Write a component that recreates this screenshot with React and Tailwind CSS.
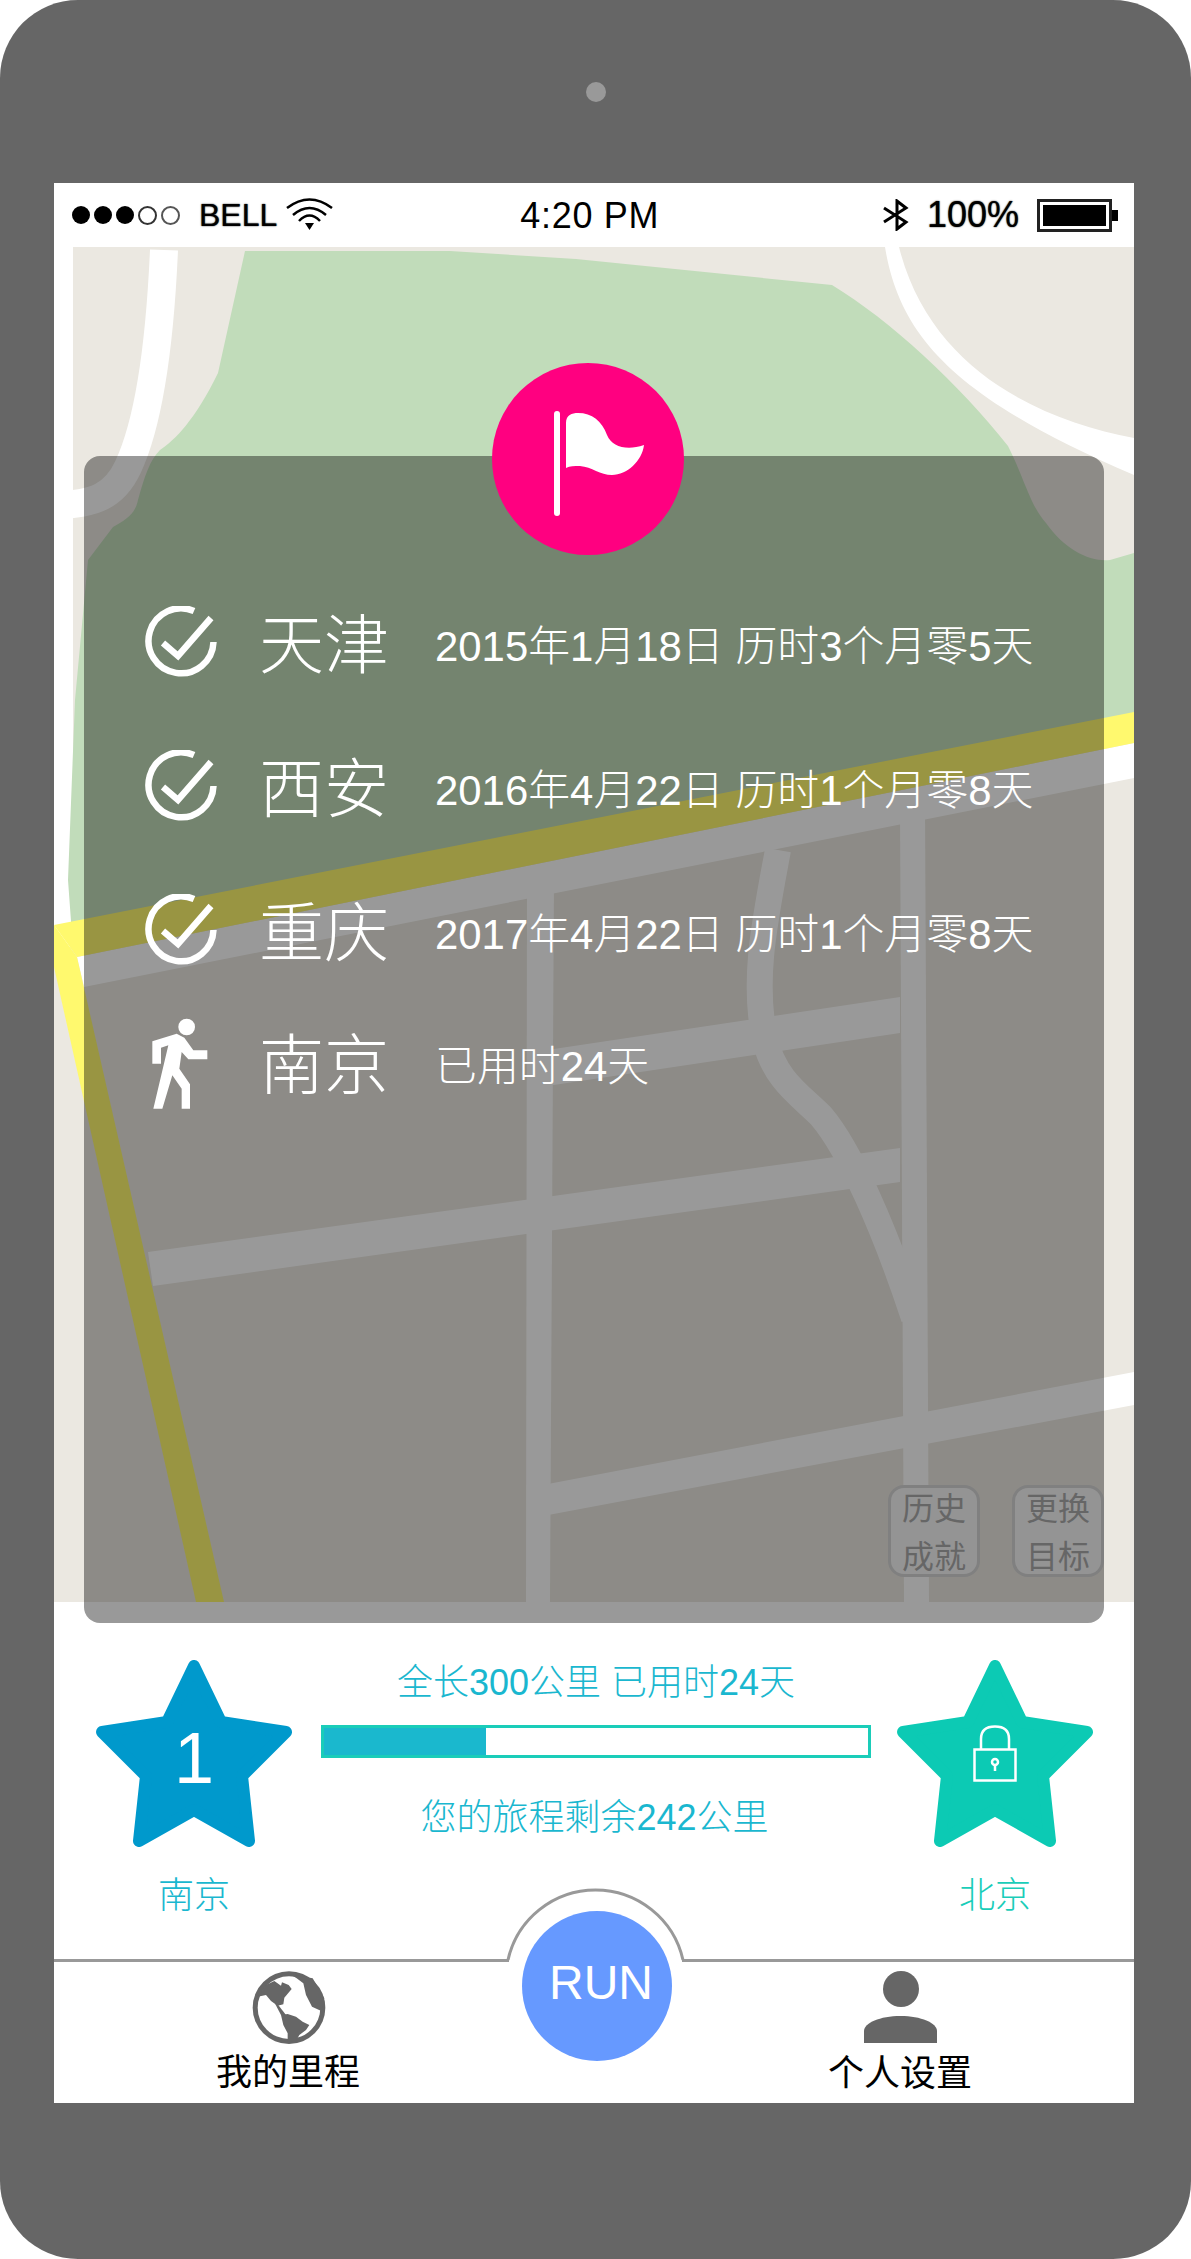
import React from "react"

const sans = "font-['Liberation_Sans','Noto_Sans_CJK_SC',sans-serif]"

const CheckIcon = () => (
  <svg viewBox="0 0 72 72" className="w-[72px] h-[72px]" fill="none" stroke="white">
    <path d="M49 5A32.5 32.5 0 1 0 68.5 36" strokeWidth="6.5" />
    <path d="M18 37L33 50L66 12" strokeWidth="6.5" />
  </svg>
)

const WalkerIcon = () => (
  <svg viewBox="0 0 270 330" className="w-[90px] h-[110px]" fill="white">
    <circle cx="155" cy="60" r="25" />
    <path d="M52 103L125 80L148 92L175 130L217 130L217 157L160 157L140 135L133 185L165 232L165 305L140 305L140 245L112 205L82 305L55 305L100 115L78 122L78 170L52 170Z" />
  </svg>
)

const FlagIcon = () => (
  <svg viewBox="0 0 192 192" className="w-[192px] h-[192px]" fill="white">
    <rect x="62" y="48" width="6" height="105" rx="3" />
    <path d="M74 60C74 52 80 50 86 50C100 50 110 58 115 72C120 84 135 88 152 82C150 98 135 112 120 112C108 112 100 104 88 103C82 103 78 103 74 105Z" />
  </svg>
)

const Star = ({ color, children }) => (
  <svg viewBox="0 0 196 187" className="w-[196px] h-[187px]">
    <path
      d="M98 6L125 62L190 72L146 116L153 181L98 150L43 181L50 116L6 72L71 62Z"
      fill={color}
      stroke={color}
      strokeWidth="12"
      strokeLinejoin="round"
    />
    {children}
  </svg>
)

const LockIcon = () => (
  <g transform="translate(76 65)" fill="none" stroke="white" strokeWidth="2.5">
    <rect x="1.5" y="24.5" width="41" height="31" />
    <path d="M8 24V14C8 5 13 1.5 22 1.5C31 1.5 36 5 36 14V24" />
    <circle cx="22" cy="37" r="3" />
    <path d="M22 40V46" />
  </g>
)

const GlobeIcon = () => (
  <svg viewBox="0 0 255 255" className="w-[85px] h-[85px]">
    <circle cx="129" cy="128" r="109" fill="#666" />
    <circle cx="129" cy="128" r="94" fill="white" />
    <g fill="#666">
      <path d="M35 95L60 90L75 108L95 122L112 118L115 98L137 72L128 60L108 52L105 62L85 48L60 60Z" />
      <path d="M95 118L120 150L105 150L85 112Z" />
      <path d="M105 150L125 147L150 155L170 170L190 180L180 195L160 210L150 228L125 232L125 205L112 180Z" />
      <path d="M132 28L152 40L172 55L180 90L198 125L226 138L235 100L200 40Z" />
    </g>
  </svg>
)

const PersonIcon = () => (
  <svg viewBox="0 0 73 72" className="w-[73px] h-[72px]" fill="#666">
    <ellipse cx="37" cy="18" rx="18" ry="18" />
    <path d="M0 72V60C0 52 16 45 36.5 45C57 45 73 52 73 60V72Z" />
  </svg>
)

const WifiIcon = () => (
  <svg viewBox="0 0 47 34" className="w-[47px] h-[34px]" fill="none" stroke="black" strokeWidth="2.5">
    <path d="M1 12Q23.5 -5 46 12" />
    <path d="M7 19Q23.5 5 40 19" />
    <path d="M13 25Q23.5 14 34 25" />
    <path d="M19 27L28 27L23.5 34Z" fill="black" stroke="none" />
  </svg>
)

const BluetoothIcon = () => (
  <svg viewBox="0 0 30 32" className="w-[30px] h-[32px]" fill="none" stroke="black" strokeWidth="3">
    <path d="M2 9L24 23L15 30L15 2L24 9L2 23" />
  </svg>
)

const MapDrawing = () => (
  <svg viewBox="54 247 1080 1355" className="block w-full h-full">
    <rect x="54" y="247" width="1080" height="1355" fill="#ebe8e1" />
    <rect x="54" y="247" width="19" height="700" fill="white" />
    {/* park */}
    <path
      d="M245 251L450 251L576 259L832 285C890 320 960 385 1008 446C1025 480 1030 505 1046 523C1065 550 1090 562 1110 560L1134 553L1134 720L72 935L68 880L75 700L88 560L113 527C125 520 135 515 138 500C145 475 150 460 160 450C175 440 195 420 218 373Z"
      fill="#c1dcba"
    />
    {/* white roads, top corners */}
    <path d="M164 250C160 340 150 420 128 467C115 495 95 505 54 505" fill="none" stroke="white" strokeWidth="28" />
    <path d="M885 247C900 340 960 400 1134 475L1134 438C1040 420 930 370 899 247Z" fill="white" />
    {/* main diagonal and grid */}
    <g fill="white">
      <path d="M77 957L1134 743L1134 778L84 987Z" />
      <path d="M527 880L554 875L550 1602L526 1602Z" />
      <path d="M900 810L925 805L929 1602L904 1602Z" />
      <path d="M148 1252L900 1148L900 1182L153 1286Z" />
      <path d="M527 1053L900 997L900 1033L527 1089Z" />
      <path d="M527 1488L1134 1372L1134 1405L527 1519Z" />
    </g>
    <path
      d="M778 850C765 920 752 980 765 1040C775 1080 800 1095 821 1116C850 1150 885 1230 914 1318"
      fill="none"
      stroke="white"
      strokeWidth="26"
    />
    {/* yellow highway */}
    <g fill="#fff96e">
      <path d="M54 925L1134 712L1134 743L77 957Z" />
      <path d="M54 925L77 957L224 1602L196 1602L54 967Z" />
    </g>
  </svg>
)

const trips = [
  { city: "天津", detail: "2015年1月18日 历时3个月零5天", row: "h-[144px]" },
  { city: "西安", detail: "2016年4月22日 历时1个月零8天", row: "h-[144px]" },
  { city: "重庆", detail: "2017年4月22日 历时1个月零8天", row: "h-[144px]" },
  { city: "南京", detail: "已用时24天", row: "h-[120px]", walking: true },
]

function StatusBar() {
  return (
    <div className="flex items-center h-[64px] pl-[18px] pr-[16px] text-black">
      <div className="flex items-center">
        <div className="flex items-center gap-[4px]">
          <span className="w-[18px] h-[18px] rounded-full bg-black" />
          <span className="w-[18px] h-[18px] rounded-full bg-black" />
          <span className="w-[18px] h-[18px] rounded-full bg-black" />
          <span className="w-[19px] h-[19px] rounded-full border-2 border-[#333]" />
          <span className="w-[19px] h-[19px] rounded-full border-2 border-[#555]" />
        </div>
        <span className="ml-[19px] text-[32px] leading-none [text-shadow:0_0_1.5px_black]">BELL</span>
        <span className="ml-[9px] -mt-[4px]">
          <WifiIcon />
        </span>
      </div>
      <span className="ml-[187px] text-[36px] leading-none tracking-[0.7px] mt-[2px]">4:20 PM</span>
      <div className="ml-auto flex items-center">
        <BluetoothIcon />
        <span className="ml-[15px] text-[36px] leading-none [text-shadow:0_0_1.5px_black]">100%</span>
        <div className="ml-[18px] w-[75px] h-[33px] border-[3px] border-[#222] p-[3px]">
          <div className="w-full h-full bg-black" />
        </div>
        <div className="w-[6px] h-[11px] bg-black" />
      </div>
    </div>
  )
}

function TripPanel() {
  return (
    <div className="absolute left-[30px] top-[273px] w-[1020px] h-[1167px] rounded-[16px] bg-black/40 pt-[114px] pl-[61px] text-white">
      <div className="absolute -top-[93px] left-[408px] w-[192px] h-[192px] rounded-full bg-[#ff0080]">
        <FlagIcon />
      </div>

      {trips.map((trip) => (
        <div key={trip.city} className={`flex items-center ${trip.row}`}>
          <div className="w-[72px] flex justify-center">
            {trip.walking ? (
              <span className="-ml-[3px]">
                <WalkerIcon />
              </span>
            ) : (
              <CheckIcon />
            )}
          </div>
          <span className="ml-[42px] w-[130px] text-[65px] leading-none mt-[6px] font-light whitespace-nowrap">{trip.city}</span>
          <span className="ml-[46px] text-[41.9px] leading-none mt-[10px] font-light">{trip.detail}</span>
        </div>
      ))}

      <div className="absolute right-[0px] bottom-[46px] flex gap-[32px]">
        {[["历史", "成就"], ["更换", "目标"]].map((lines) => (
          <div
            key={lines[0]}
            className="w-[92px] h-[92px] rounded-[16px] border-[3px] border-[#808080] bg-[#949494] flex flex-col items-center justify-center pt-[4px] text-[32px] leading-[48px] text-[#666]"
          >
            <span>{lines[0]}</span>
            <span>{lines[1]}</span>
          </div>
        ))}
      </div>
    </div>
  )
}

function Progress() {
  return (
    <div className="flex pt-[58px] pl-[42px] pr-[41px] h-[357px] font-light">
      <div className="w-[196px] flex flex-col items-center">
        <div className="relative">
          <Star color="#0099cc" />
          <span className="absolute inset-0 flex items-center justify-center pt-[8px] text-[72px] leading-none text-white">
            1
          </span>
        </div>
        <span className="mt-[27px] text-[36px] leading-[44px] text-[#1ab7cf]">南京</span>
      </div>

      <div className="ml-[29px] w-[550px] flex flex-col items-center text-[36px] text-[#1ab7cf]">
        <span className="mt-[1px] leading-[44px]">全长300公里 已用时24天</span>
        <div className="mt-[20px] w-full h-[33px] border-[3px] border-[#1acdb9]">
          <div className="w-[162px] h-full bg-[#1ab8ce]" />
        </div>
        <span className="mt-[38px] -ml-[3px] leading-[44px]">您的旅程剩余242公里</span>
      </div>

      <div className="ml-[26px] w-[196px] flex flex-col items-center">
        <Star color="#0ccab4">
          <LockIcon />
        </Star>
        <span className="mt-[27px] text-[36px] leading-[44px] text-[#1acdb9]">北京</span>
      </div>
    </div>
  )
}

function TabBar() {
  return (
    <div className="relative h-[144px] border-t-[3px] border-[#999] flex pl-[134px] pt-[9px] text-black">
      <svg viewBox="505 1886 182 80" className="absolute left-[451px] -top-[76px] w-[182px] h-[80px]">
        <rect x="509" y="1957" width="173" height="8" fill="white" />
        <path d="M508 1960A89.7 89.7 0 0 1 683 1960" fill="white" stroke="#999" strokeWidth="3" />
      </svg>
      <div className="absolute left-[468px] -top-[51px] w-[150px] h-[150px] rounded-full bg-[#6699ff] flex items-center justify-center pb-[6px] pl-[8px] text-[48px] leading-none text-white">
        RUN
      </div>

      <div className="w-[200px] flex flex-col items-center">
        <span className="-mt-[6px] mb-[1px]">
          <GlobeIcon />
        </span>
        <span className="text-[36px] leading-[44px]">我的里程</span>
      </div>
      <div className="ml-[412px] w-[200px] flex flex-col items-center">
        <PersonIcon />
        <span className="mt-[9px] text-[36px] leading-[44px]">个人设置</span>
      </div>
    </div>
  )
}

export default function App() {
  return (
    <div className={`w-[1191px] h-[2259px] rounded-[78px] bg-[#666] ${sans}`}>
      <div className="h-[183px] flex items-center justify-center">
        <div className="w-[20px] h-[20px] rounded-full bg-[#999]" />
      </div>
      <div className="relative ml-[54px] w-[1080px] h-[1920px] bg-white">
        <StatusBar />
        <div className="h-[1355px]">
          <MapDrawing />
        </div>
        <Progress />
        <TabBar />
        <TripPanel />
      </div>
    </div>
  )
}
